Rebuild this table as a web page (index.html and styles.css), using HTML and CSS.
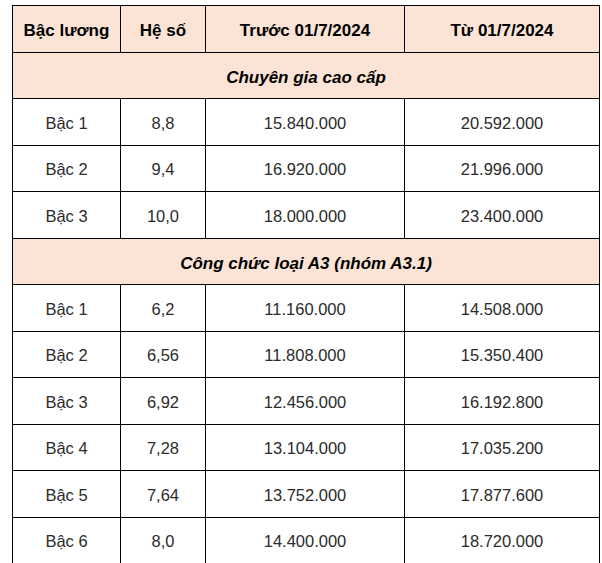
FILE: index.html
```html
<!DOCTYPE html>
<html lang="vi">
<head>
<meta charset="utf-8">
<link rel="stylesheet" href="styles.css">
</head>
<body>
<div class="wrap">
<table class="salary">
  <colgroup>
    <col class="c1"><col class="c2"><col class="c3"><col class="c4">
  </colgroup>
  <tr class="head">
    <th>Bậc lương</th><th>Hệ số</th><th>Trước 01/7/2024</th><th>Từ 01/7/2024</th>
  </tr>
  <tr class="section"><td colspan="4">Chuyên gia cao cấp</td></tr>
  <tr><td>Bậc 1</td><td>8,8</td><td>15.840.000</td><td>20.592.000</td></tr>
  <tr><td>Bậc 2</td><td>9,4</td><td>16.920.000</td><td>21.996.000</td></tr>
  <tr><td>Bậc 3</td><td>10,0</td><td>18.000.000</td><td>23.400.000</td></tr>
  <tr class="section"><td colspan="4">Công chức loại A3 (nhóm A3.1)</td></tr>
  <tr><td>Bậc 1</td><td>6,2</td><td>11.160.000</td><td>14.508.000</td></tr>
  <tr><td>Bậc 2</td><td>6,56</td><td>11.808.000</td><td>15.350.400</td></tr>
  <tr><td>Bậc 3</td><td>6,92</td><td>12.456.000</td><td>16.192.800</td></tr>
  <tr><td>Bậc 4</td><td>7,28</td><td>13.104.000</td><td>17.035.200</td></tr>
  <tr><td>Bậc 5</td><td>7,64</td><td>13.752.000</td><td>17.877.600</td></tr>
  <tr><td>Bậc 6</td><td>8,0</td><td>14.400.000</td><td>18.720.000</td></tr>
</table>
</div>
</body>
</html>
```
FILE: styles.css
```css
html, body {
  margin: 0;
  padding: 0;
  background: #ffffff;
}
.wrap {
  padding: 5px 0 0 12px;
}
.salary {
  border-collapse: collapse;
  table-layout: fixed;
  width: 587px;
  font-family: "Liberation Sans", Arial, sans-serif;
  font-size: 16.5px;
  color: #2b2b2b;
}
.c1 { width: 108px; }
.c2 { width: 85px; }
.c3 { width: 199px; }
.c4 { width: 195px; }
.salary th,
.salary td {
  border: 1px solid #000000;
  padding: 2px 0 0;
  text-align: center;
  vertical-align: middle;
}
.salary tr:nth-child(odd) { height: 47px; }
.salary tr:nth-child(even) { height: 46px; }
.head th {
  background: #fbe4d5;
  font-size: 17px;
  font-weight: bold;
  color: #000000;
  padding-top: 4px;
}
.section td {
  background: #fbe4d5;
  font-size: 17px;
  font-weight: bold;
  font-style: italic;
  color: #000000;
  padding-top: 4px;
}
```
